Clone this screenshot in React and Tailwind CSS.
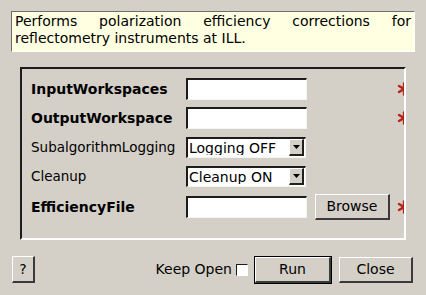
import { useState } from "react";

const font = { fontFamily: '"DejaVu Sans", Verdana, sans-serif' };

const Star = () => (
  <svg width="14" height="14" viewBox="0 0 14 14" className="shrink-0">
    <g stroke="#b3261e" strokeWidth="2.4" strokeLinecap="round">
      <line x1="7" y1="1.5" x2="7" y2="12.5" />
      <line x1="2" y1="4" x2="12" y2="10" />
      <line x1="2" y1="10" x2="12" y2="4" />
    </g>
  </svg>
);

const TextField = () => (
  <div className="shrink-0 w-[121px] h-[22px] bg-white border-t-2 border-l-2 border-b border-r border-t-[#1c1c1c] border-l-[#1c1c1c] border-b-[#f4f4f4] border-r-[#f4f4f4]" />
);

const Combo = ({ value }) => (
  <div className="shrink-0 w-[120px] h-[21px] bg-white flex items-center border-t-2 border-l-2 border-b border-r border-t-[#1c1c1c] border-l-[#1c1c1c] border-b-[#f4f4f4] border-r-[#f4f4f4]">
    <span className="flex-1 pl-[1px] text-[14px] text-black leading-none whitespace-nowrap overflow-hidden">{value}</span>
    <div className="shrink-0 w-[15px] h-[17px] mr-[1px] bg-[#d4d0c8] flex items-center justify-center border-t border-l border-b-2 border-r-2 border-t-white border-l-white border-b-[#202020] border-r-[#202020]">
      <svg width="7" height="4" viewBox="0 0 7 4">
        <polygon points="0,0 7,0 3.5,4" fill="#000" />
      </svg>
    </div>
  </div>
);

const Button = ({ children, className = "", isDefault = false }) => (
  <button
    className={`shrink-0 flex items-center justify-center text-[14px] text-black bg-[#d4d0c8] border-t border-l border-b-2 border-r-2 border-t-white border-l-white border-b-[#3a3a3a] border-r-[#3a3a3a] ${isDefault ? "outline outline-1 outline-black" : ""} ${className}`}
  >
    {children}
  </button>
);

const Row = ({ label, bold, children, tall }) => (
  <div className={`flex items-center shrink-0 ${tall ? "h-[26px]" : "h-[22px]"}`}>
    <div className={`shrink-0 w-[155px] text-black whitespace-nowrap ${bold ? "font-bold text-[14px]" : "text-[13.5px]"}`}>{label}</div>
    {children}
  </div>
);

export default function App() {
  const [keepOpen, setKeepOpen] = useState(false);
  return (
    <div className="w-[426px] h-[295px] bg-[#d4d0c8] flex flex-col overflow-hidden" style={font}>
      <div className="shrink-0 mx-[11px] mt-[11px] h-[41px] bg-[#ffffe1] border-t border-l border-t-[#6e6e6e] border-l-[#6e6e6e] border-b border-r border-b-white border-r-white px-[3px] pt-[1px] text-[14px] leading-[17px] text-black text-justify">
        Performs polarization efficiency corrections for reflectometry instruments at ILL.
      </div>

      <div className="shrink-0 ml-[20px] mt-[15px] w-[386px] h-[173px] overflow-hidden border-t-2 border-l-2 border-t-[#1c1c1c] border-l-[#1c1c1c] border-b-2 border-r-2 border-b-white border-r-white pl-[9px] pt-[9px] flex flex-col gap-[7px]">
        <Row label="InputWorkspaces" bold>
          <TextField />
          <div className="shrink-0 ml-[90px]"><Star /></div>
        </Row>
        <Row label="OutputWorkspace" bold>
          <TextField />
          <div className="shrink-0 ml-[90px]"><Star /></div>
        </Row>
        <Row label="SubalgorithmLogging">
          <Combo value="Logging OFF" />
        </Row>
        <Row label="Cleanup">
          <Combo value="Cleanup ON" />
        </Row>
        <Row label="EfficiencyFile" bold tall>
          <TextField />
          <Button className="ml-[8px] w-[75px] h-[26px]">Browse</Button>
          <div className="shrink-0 ml-[7px]"><Star /></div>
        </Row>
      </div>

      <div className="flex items-center mt-[16px] px-[12px]">
        <Button className="w-[23px] h-[27px]">?</Button>
        <div className="flex-1" />
        <span className="text-[14px] text-black">Keep Open</span>
        <button
          onClick={() => setKeepOpen(!keepOpen)}
          className="shrink-0 ml-[4px] w-[12px] h-[12px] bg-white border-t border-l border-t-[#1c1c1c] border-l-[#1c1c1c] border-b border-r border-b-white border-r-white"
        />
        <Button isDefault className="ml-[7px] w-[76px] h-[26px]">Run</Button>
        <Button className="ml-[8px] w-[74px] h-[26px] mr-[1px]">Close</Button>
      </div>
    </div>
  );
}
